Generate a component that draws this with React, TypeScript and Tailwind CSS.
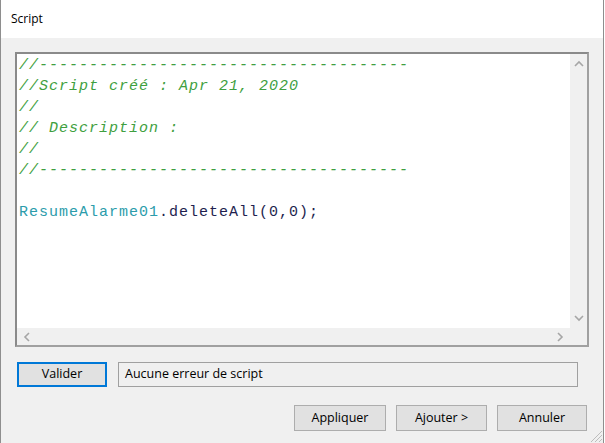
const ui = { fontFamily: '"Open Sans", "Liberation Sans", Arial, sans-serif' }
const mono = { fontFamily: '"Liberation Mono", "Courier New", monospace' }

const DASHES = '//' + '-'.repeat(37)

function Chevron({ dir }: { dir: 'up' | 'down' | 'left' | 'right' }) {
  const pts = {
    up: '1,6 5,2 9,6',
    down: '1,2 5,6 9,2',
    left: '6,1 2,5 6,9',
    right: '2,1 6,5 2,9',
  }[dir]
  const w = dir === 'up' || dir === 'down' ? 10 : 8
  const h = dir === 'up' || dir === 'down' ? 8 : 10
  return (
    <svg width={w} height={h} viewBox={`0 0 ${w} ${h}`}>
      <polyline points={pts} fill="none" stroke="#a6a6a6" strokeWidth="1.6" />
    </svg>
  )
}

function WinButton({ label, className = '' }: { label: string; className?: string }) {
  return (
    <button
      type="button"
      className={`flex h-[26px] items-center justify-center border border-[#adadad] bg-[#e1e1e1] text-[12.5px] text-black ${className}`}
      style={ui}
    >
      {label}
    </button>
  )
}

export default function App() {
  return (
    <div className="h-[443px] w-[605px] overflow-hidden bg-white">
      <div className="flex h-[443px] w-[604px] flex-col border-x border-[#8e8e8e]">
        {/* barre de titre */}
        <div className="flex h-[38px] items-center bg-white pl-[10px] text-[12px] text-black" style={ui}>
          Script
        </div>

        <div className="relative flex flex-1 flex-col bg-[#f0f0f0] pl-[14px] pt-[14px]">
          {/* éditeur */}
          <div className="flex h-[295px] w-[574px] flex-col border-2 border-[#a0a0a0] border-t-[#8a8a8a] border-l-[#8a8a8a]">
            <div className="flex min-h-0 flex-1">
              <div
                className="flex-1 bg-white pl-[2px] pt-[1px] text-[15px] leading-[21px] tracking-[1px]"
                style={mono}
              >
                <div className="italic text-[#3f9f3f]">{DASHES}</div>
                <div className="italic text-[#3f9f3f]">//Script créé : Apr 21, 2020</div>
                <div className="italic text-[#3f9f3f]">//</div>
                <div className="italic text-[#3f9f3f]">// Description :</div>
                <div className="italic text-[#3f9f3f]">//</div>
                <div className="italic text-[#3f9f3f]">{DASHES}</div>
                <div>&nbsp;</div>
                <div>
                  <span className="text-[#2c9cab]">ResumeAlarme01</span>
                  <span className="text-[#1f1f4f]">.deleteAll(0,0);</span>
                </div>
              </div>
              <div className="flex w-[17px] flex-col items-center justify-between bg-[#f0f0f0] py-[6px]">
                <Chevron dir="up" />
                <Chevron dir="down" />
              </div>
            </div>
            <div className="flex h-[17px] items-center justify-between bg-[#f0f0f0] pl-[6px] pr-[23px]">
              <Chevron dir="left" />
              <Chevron dir="right" />
            </div>
          </div>

          {/* validation */}
          <div className="mt-[15px] flex items-center">
            <button
              type="button"
              className="ml-[2px] flex h-[25px] w-[90px] items-center justify-center border-2 border-[#0078d7] bg-[#e1e1e1] text-[12.5px] text-black"
              style={ui}
            >
              Valider
            </button>
            <div
              className="ml-[11px] flex h-[25px] w-[460px] items-center border border-[#a0a0a0] bg-[#f0f0f0] pl-[6px] text-[12.5px] text-black"
              style={ui}
            >
              Aucune erreur de script
            </div>
          </div>

          {/* boutons */}
          <div className="mt-[18px] flex gap-[10px] pl-[279px]">
            <WinButton label="Appliquer" className="w-[92px]" />
            <WinButton label="Ajouter >" className="w-[91px]" />
            <WinButton label="Annuler" className="w-[90px]" />
          </div>

          {/* poignée de redimensionnement */}
          <svg className="absolute bottom-0 right-0" width="14" height="14" viewBox="0 0 14 14">
            <line x1="13" y1="2" x2="2" y2="13" stroke="#bdbdbd" />
            <line x1="13" y1="6" x2="6" y2="13" stroke="#bdbdbd" />
            <line x1="13" y1="10" x2="10" y2="13" stroke="#bdbdbd" />
          </svg>
        </div>
      </div>
    </div>
  )
}
